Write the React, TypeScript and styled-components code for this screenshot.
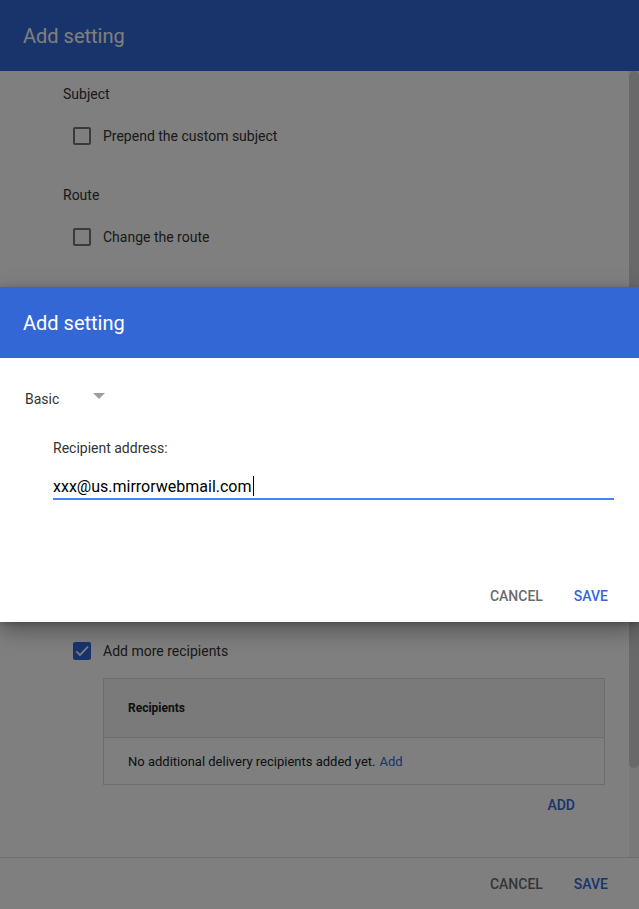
import React from 'react';
import styled, { createGlobalStyle } from 'styled-components';

const colors = {
  primary: '#3367d6',
  focus: '#4285f4',
  text: '#212121',
  label: '#333333',
  muted: '#6b6b6b',
  border: '#dadada',
};

const GlobalStyle = createGlobalStyle`
  html, body {
    margin: 0;
    padding: 0;
    background: #fff;
    font-family: Roboto, "Liberation Sans", Arial, sans-serif;
  }
  * { box-sizing: border-box; }
`;

const Page = styled.div`
  position: relative;
  width: 639px;
  height: 909px;
  overflow: hidden;
`;

const Dialog = styled.div`
  display: flex;
  flex-direction: column;
  height: 909px;
  background: #fff;
`;

const Header = styled.div`
  height: 71px;
  flex: none;
  display: flex;
  align-items: center;
  padding-left: 23px;
  background: ${colors.primary};
  color: #fff;
  font-size: 20px;
  font-weight: 400;
`;

const ScrollBody = styled.div`
  flex: 1;
  display: flex;
  min-height: 0;
`;

const Content = styled.div`
  flex: 1;
  padding: 13px 24px 0 63px;
`;

const Rail = styled.div`
  width: 10px;
  flex: none;
  background: #f3f3f3;
`;

const Thumb = styled.div`
  height: 697px;
  border-radius: 5px;
  background: #d2d2d2;
`;

const SectionLabel = styled.div<{ $top?: number }>`
  margin-top: ${(p) => p.$top ?? 0}px;
  font-size: 14px;
  line-height: 20px;
  color: ${colors.label};
`;

const CheckRow = styled.label<{ $top: number }>`
  display: flex;
  align-items: center;
  gap: 12px;
  margin: ${(p) => p.$top}px 0 0 10px;
  height: 20px;
  font-size: 14px;
  color: ${colors.label};
`;

const Box = styled.span<{ $checked?: boolean }>`
  width: 18px;
  height: 18px;
  flex: none;
  border-radius: 2px;
  display: flex;
  align-items: center;
  justify-content: center;
  border: ${(p) => (p.$checked ? 'none' : '2px solid #757575')};
  background: ${(p) => (p.$checked ? colors.primary : 'transparent')};
`;

const Checkbox = ({ label, checked, top }: { label: string; checked?: boolean; top: number }) => (
  <CheckRow $top={top}>
    <Box $checked={checked}>
      {checked && (
        <svg width="16" height="16" viewBox="0 0 24 24">
          <path d="M3.5 12.5l5.5 5.5L21 5.5" fill="none" stroke="#fff" strokeWidth="2.6" />
        </svg>
      )}
    </Box>
    {label}
  </CheckRow>
);

const Table = styled.div`
  margin: 17px 0 0 40px;
  border: 1px solid ${colors.border};
`;

const TableHead = styled.div`
  height: 59px;
  display: flex;
  align-items: center;
  padding-left: 24px;
  background: #f5f5f5;
  border-bottom: 1px solid ${colors.border};
  font-size: 12px;
  font-weight: 700;
  color: ${colors.text};
`;

const TableRow = styled.div`
  height: 46px;
  display: flex;
  align-items: center;
  padding-left: 24px;
  font-size: 13px;
  color: ${colors.text};
`;

const Link = styled.a`
  color: ${colors.primary};
  text-decoration: none;
  margin-left: 4px;
`;

const InlineActions = styled.div`
  display: flex;
  justify-content: flex-end;
  margin: 10px 30px 0 0;
`;

const TextButton = styled.button<{ $primary?: boolean }>`
  border: none;
  background: none;
  padding: 0;
  font-family: inherit;
  font-size: 14px;
  font-weight: 500;
  line-height: 20px;
  text-transform: uppercase;
  color: ${(p) => (p.$primary ? colors.primary : colors.muted)};
`;

const Footer = styled.div<{ $bordered?: boolean }>`
  height: 52px;
  flex: none;
  display: flex;
  align-items: center;
  justify-content: flex-end;
  gap: 31px;
  padding-right: 31px;
  border-top: ${(p) => (p.$bordered ? '1px solid #dcdcdc' : 'none')};
`;

const Scrim = styled.div`
  position: absolute;
  inset: 0;
  background: rgba(0, 0, 0, 0.5);
`;

const Modal = styled.div`
  position: absolute;
  top: 287px;
  left: 0;
  right: 0;
  background: #fff;
  box-shadow: 0 8px 22px rgba(0, 0, 0, 0.35), 0 2px 6px rgba(0, 0, 0, 0.2);
`;

const ModalBody = styled.div`
  padding: 31px 25px 70px 25px;
`;

const Select = styled.div`
  display: flex;
  align-items: flex-start;
  width: 80px;
  justify-content: space-between;
  font-size: 14px;
  line-height: 20px;
  color: ${colors.label};
`;

const Arrow = styled.span`
  margin-top: 4px;
  width: 0;
  height: 0;
  border-left: 6px solid transparent;
  border-right: 6px solid transparent;
  border-top: 6px solid #9e9e9e;
`;

const Field = styled.div`
  margin: 29px 0 0 28px;
`;

const FieldLabel = styled.div`
  font-size: 14px;
  line-height: 20px;
  color: ${colors.label};
`;

const InputLine = styled.div`
  margin-top: 17px;
  display: flex;
  align-items: center;
  height: 25px;
  padding-bottom: 1px;
  border-bottom: 2px solid ${colors.focus};
  font-size: 16px;
  color: #000;
`;

const Caret = styled.span`
  width: 1px;
  height: 20px;
  background: #000;
  margin-left: 1px;
`;

export default function App() {
  return (
    <Page>
      <GlobalStyle />
      <Dialog>
        <Header>Add setting</Header>
        <ScrollBody>
          <Content>
            <SectionLabel>Subject</SectionLabel>
            <Checkbox top={22} label="Prepend the custom subject" />
            <SectionLabel $top={39}>Route</SectionLabel>
            <Checkbox top={22} label="Change the route" />
            <Checkbox top={394} checked label="Add more recipients" />
            <Table>
              <TableHead>Recipients</TableHead>
              <TableRow>
                No additional delivery recipients added yet.<Link href="#">Add</Link>
              </TableRow>
            </Table>
            <InlineActions>
              <TextButton $primary>Add</TextButton>
            </InlineActions>
          </Content>
          <Rail>
            <Thumb />
          </Rail>
        </ScrollBody>
        <Footer $bordered>
          <TextButton>Cancel</TextButton>
          <TextButton $primary>Save</TextButton>
        </Footer>
      </Dialog>
      <Scrim />
      <Modal>
        <Header>Add setting</Header>
        <ModalBody>
          <Select>
            Basic
            <Arrow />
          </Select>
          <Field>
            <FieldLabel>Recipient address:</FieldLabel>
            <InputLine>
              xxx@us.mirrorwebmail.com
              <Caret />
            </InputLine>
          </Field>
        </ModalBody>
        <Footer>
          <TextButton>Cancel</TextButton>
          <TextButton $primary>Save</TextButton>
        </Footer>
      </Modal>
    </Page>
  );
}
